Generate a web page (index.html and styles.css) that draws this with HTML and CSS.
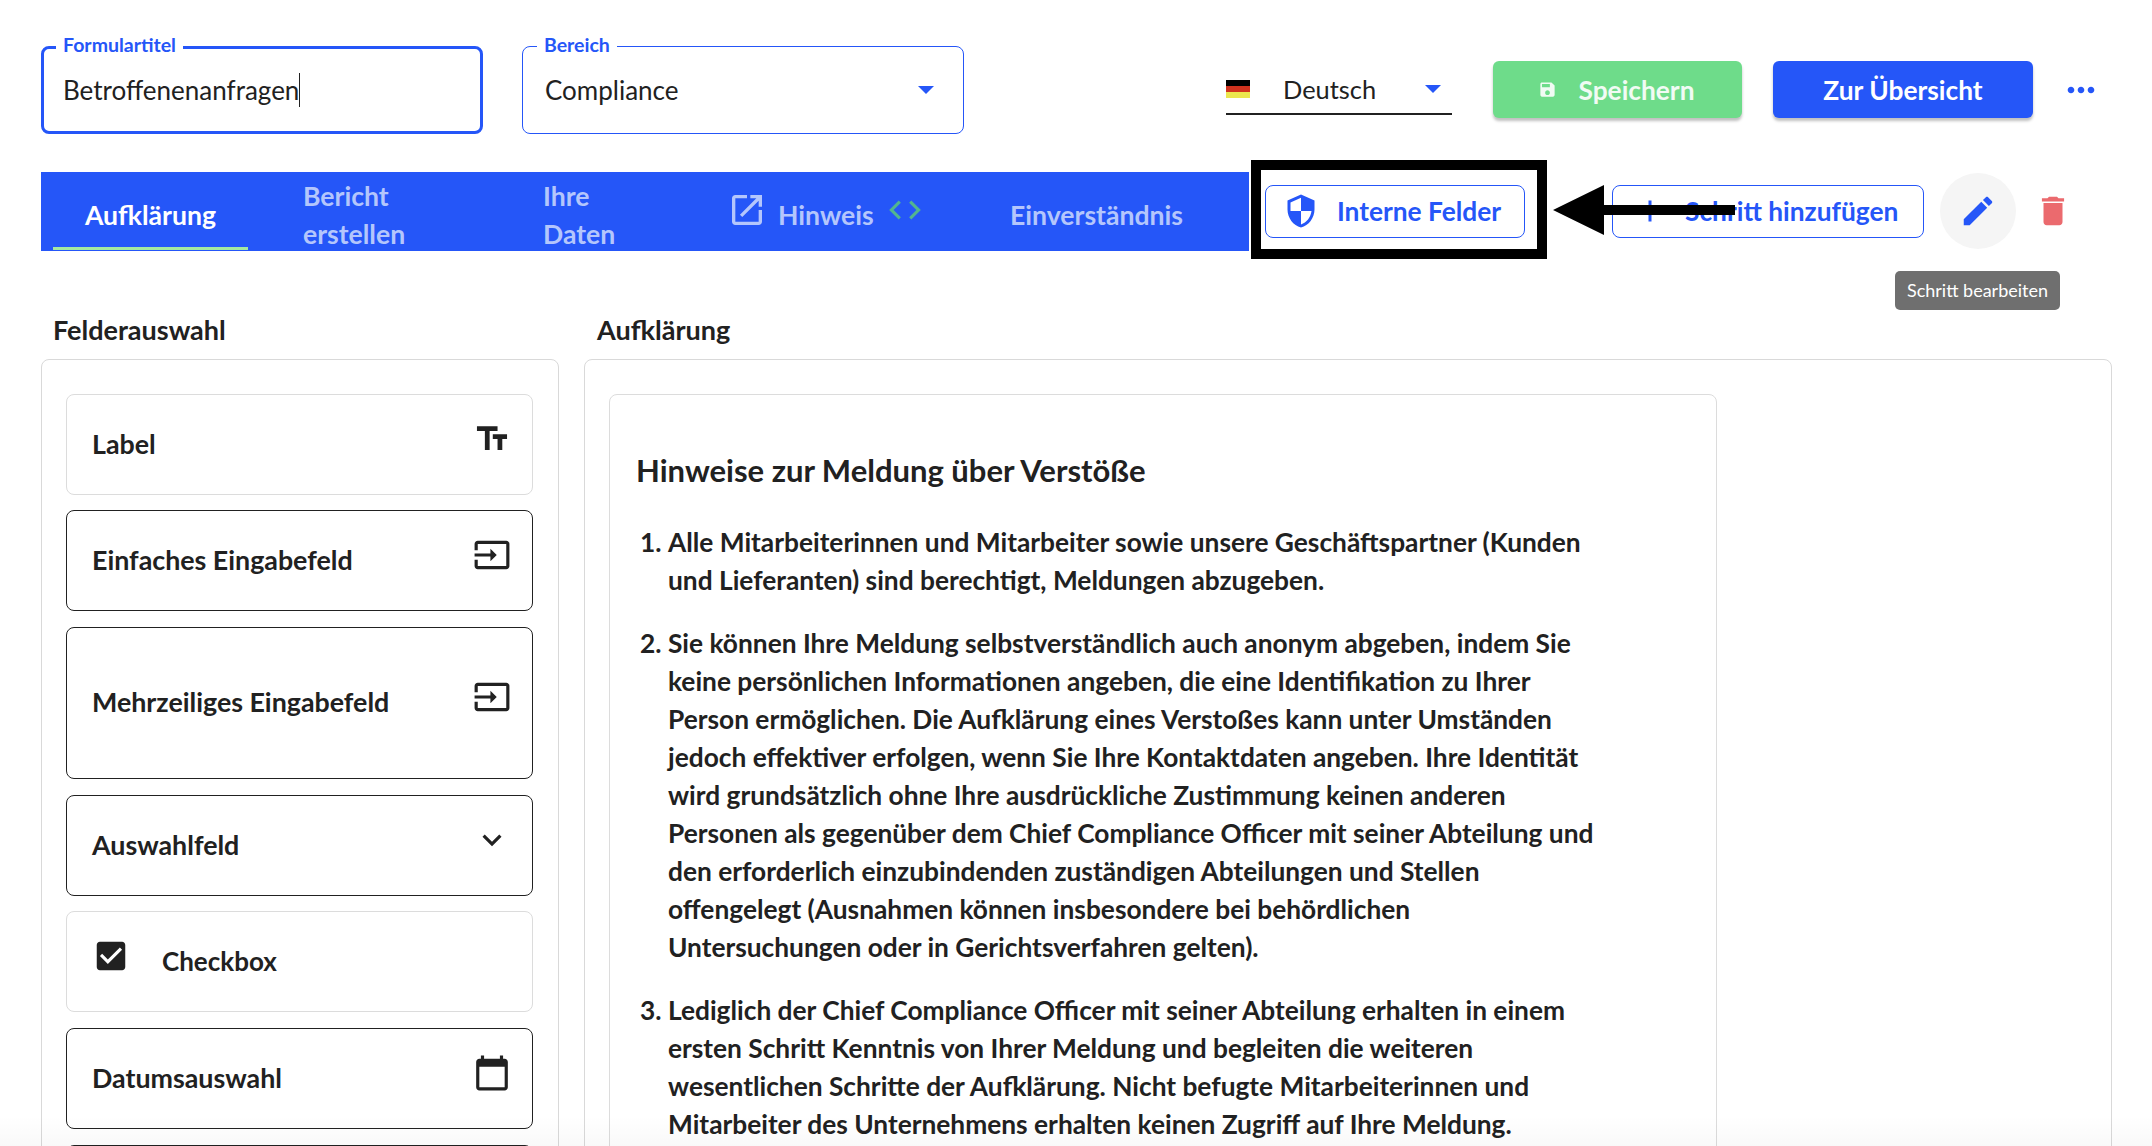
FILE: index.html
```html
<!DOCTYPE html>
<html lang="de">
<head>
    <meta charset="utf-8">
    <meta name="viewport" content="width=device-width, initial-scale=1.0">
    <title>Formular bearbeiten</title>
    <link rel="stylesheet" href="styles.css">
</head>
<body>
    <div class="page">
        <header class="topbar">
            <div class="outlined outlined-focus">
                <span class="outlined-label">Formulartitel</span>
                <span class="outlined-value">Betroffenenanfragen<span class="caret-line"></span></span>
            </div>
            <div class="outlined">
                <span class="outlined-label">Bereich</span>
                <span class="outlined-value">Compliance</span>
                <span class="select-arrow"></span>
            </div>
            <div class="lang-select">
                <span class="flag"><i class="flag-black"></i><i class="flag-red"></i><i class="flag-gold"></i></span>
                <span class="lang-name">Deutsch</span>
                <span class="select-arrow"></span>
            </div>
            <button type="button" class="btn btn-save">
                <svg class="save-icon" viewBox="0 0 24 24"><path d="M17 3H5c-1.11 0-2 .9-2 2v14c0 1.1.89 2 2 2h14c1.1 0 2-.9 2-2V7l-4-4zm-5 16c-1.66 0-3-1.34-3-3s1.34-3 3-3 3 1.34 3 3-1.34 3-3 3zm3-10H5V5h10v4z"/></svg>
                Speichern
            </button>
            <button type="button" class="btn btn-primary">Zur Übersicht</button>
            <svg class="more-icon" viewBox="0 0 24 24"><path d="M6 10c-1.1 0-2 .9-2 2s.9 2 2 2 2-.9 2-2-.9-2-2-2zm12 0c-1.1 0-2 .9-2 2s.9 2 2 2 2-.9 2-2-.9-2-2-2zm-6 0c-1.1 0-2 .9-2 2s.9 2 2 2 2-.9 2-2-.9-2-2-2z"/></svg>
        </header>

        <nav class="steps">
            <div class="tabs">
                <a class="tab tab-active">Aufklärung</a>
                <a class="tab tab-report">Bericht<br>erstellen</a>
                <a class="tab tab-data">Ihre<br>Daten</a>
                <a class="tab tab-note">
                    <svg class="open-icon" viewBox="0 0 24 24"><path d="M19 19H5V5h7V3H5c-1.11 0-2 .9-2 2v14c0 1.1.89 2 2 2h14c1.1 0 2-.9 2-2v-7h-2v7zM14 3v2h3.59l-9.83 9.83 1.41 1.41L19 6.41V10h2V3h-7z"/></svg>
                    Hinweis
                    <svg class="code-icon" viewBox="0 0 24 24"><path d="M9.4 16.6L4.8 12l4.6-4.6L8 6l-6 6 6 6 1.4-1.4zm5.2 0l4.6-4.6-4.6-4.6L16 6l6 6-6 6-1.4-1.4z"/></svg>
                </a>
                <a class="tab tab-consent">Einverständnis</a>
            </div>
            <button type="button" class="btn-outline btn-internal">
                <svg class="shield-icon" viewBox="0 0 24 24"><path d="M12 1L3 5v6c0 5.55 3.84 10.74 9 12 5.16-1.26 9-6.45 9-12V5l-9-4zm0 10.99h7c-.53 4.12-3.28 7.79-7 8.94V12H5V6.3l7-3.11v8.8z"/></svg>
                Interne Felder
            </button>
            <button type="button" class="btn-outline btn-add">
                <svg class="plus-icon" viewBox="0 0 24 24"><path d="M19 13h-6v6h-2v-6H5v-2h6V5h2v6h6v2z"/></svg>
                Schritt hinzufügen
            </button>
            <div class="round-btn">
                <svg class="edit-icon" viewBox="0 0 24 24"><path d="M3 17.25V21h3.75L17.81 9.94l-3.75-3.75L3 17.25zM20.71 7.04c.39-.39.39-1.02 0-1.41l-2.34-2.34c-.39-.39-1.02-.39-1.41 0l-1.83 1.83 3.75 3.75 1.83-1.83z"/></svg>
            </div>
            <svg class="trash-icon" viewBox="0 0 24 24"><path d="M6 19c0 1.1.9 2 2 2h8c1.1 0 2-.9 2-2V7H6v12zM19 4h-3.5l-1-1h-5l-1 1H5v2h14V4z"/></svg>
        </nav>

        <main class="columns">
            <section class="col-fields">
                <h2 class="col-title">Felderauswahl</h2>
                <div class="panel field-list">
                    <div class="field field-muted">
                        <span>Label</span>
                        <svg class="field-icon" viewBox="0 0 24 24"><path d="M2.5 4v3h5v12h3V7h5V4h-13zm19 5h-9v3h3v7h3v-7h3V9z"/></svg>
                    </div>
                    <div class="field">
                        <span>Einfaches Eingabefeld</span>
                        <svg class="field-icon" viewBox="0 0 24 24"><path d="M21 3.01H3c-1.1 0-2 .9-2 2V9h2V4.99h18v14.03H3V15H1v4.01c0 1.1.9 1.98 2 1.98h18c1.1 0 2-.88 2-1.98v-14c0-1.11-.9-2-2-2zM11 16l4-4-4-4v3H1v2h10v3z"/></svg>
                    </div>
                    <div class="field field-tall">
                        <span>Mehrzeiliges Eingabefeld</span>
                        <svg class="field-icon" viewBox="0 0 24 24"><path d="M21 3.01H3c-1.1 0-2 .9-2 2V9h2V4.99h18v14.03H3V15H1v4.01c0 1.1.9 1.98 2 1.98h18c1.1 0 2-.88 2-1.98v-14c0-1.11-.9-2-2-2zM11 16l4-4-4-4v3H1v2h10v3z"/></svg>
                    </div>
                    <div class="field">
                        <span>Auswahlfeld</span>
                        <svg class="field-icon" viewBox="0 0 24 24"><path d="M7.41 8.59L12 13.17l4.59-4.58L18 10l-6 6-6-6 1.41-1.41z"/></svg>
                    </div>
                    <div class="field field-muted field-check">
                        <svg class="check-icon" viewBox="0 0 24 24"><path d="M19 3H5c-1.11 0-2 .9-2 2v14c0 1.1.89 2 2 2h14c1.11 0 2-.9 2-2V5c0-1.1-.89-2-2-2zm-9 14l-5-5 1.41-1.41L10 14.17l7.59-7.59L19 8l-9 9z"/></svg>
                        <span>Checkbox</span>
                    </div>
                    <div class="field">
                        <span>Datumsauswahl</span>
                        <svg class="field-icon" viewBox="0 0 24 24"><path d="M20 3h-1V1h-2v2H7V1H5v2H4c-1.1 0-2 .9-2 2v16c0 1.1.9 2 2 2h16c1.1 0 2-.9 2-2V5c0-1.1-.9-2-2-2zm0 18H4V8h16v13z"/></svg>
                    </div>
                    <div class="field"></div>
                </div>
            </section>

            <section class="col-preview">
                <h2 class="col-title">Aufklärung</h2>
                <div class="panel preview">
                    <article class="notice">
                        <h3>Hinweise zur Meldung über Verstöße</h3>
                        <ol>
                            <li>Alle Mitarbeiterinnen und Mitarbeiter sowie unsere Geschäftspartner (Kunden<br>und Lieferanten) sind berechtigt, Meldungen abzugeben.</li>
                            <li>Sie können Ihre Meldung selbstverständlich auch anonym abgeben, indem Sie<br>keine persönlichen Informationen angeben, die eine Identifikation zu Ihrer<br>Person ermöglichen. Die Aufklärung eines Verstoßes kann unter Umständen<br>jedoch effektiver erfolgen, wenn Sie Ihre Kontaktdaten angeben. Ihre Identität<br>wird grundsätzlich ohne Ihre ausdrückliche Zustimmung keinen anderen<br>Personen als gegenüber dem Chief Compliance Officer mit seiner Abteilung und<br>den erforderlich einzubindenden zuständigen Abteilungen und Stellen<br>offengelegt (Ausnahmen können insbesondere bei behördlichen<br>Untersuchungen oder in Gerichtsverfahren gelten).</li>
                            <li>Lediglich der Chief Compliance Officer mit seiner Abteilung erhalten in einem<br>ersten Schritt Kenntnis von Ihrer Meldung und begleiten die weiteren<br>wesentlichen Schritte der Aufklärung. Nicht befugte Mitarbeiterinnen und<br>Mitarbeiter des Unternehmens erhalten keinen Zugriff auf Ihre Meldung.</li>
                        </ol>
                    </article>
                </div>
            </section>
        </main>

        <!-- hover tooltip of the pencil button -->
        <div class="tooltip">Schritt bearbeiten</div>

        <!-- callout drawn over the toolbar -->
        <div class="callout-box"></div>
        <svg class="callout-arrow" viewBox="0 0 182 50"><path d="M0 25L51 0v20h131v10H51v20z"/></svg>

        <div class="bottom-fade"></div>
    </div>
</body>
</html>
```
FILE: styles.css
```css
* {
    box-sizing: border-box;
}

body {
    margin: 0;
    background-color: #ffffff;
    color: #212121;
    font-family: 'Lato', 'Noto Sans', sans-serif;
}

.page {
    position: relative;
    width: 2152px;
    height: 1146px;
    overflow: hidden;
}

svg {
    display: block;
    fill: currentColor;
    flex: none;
}

/* top row */
.topbar {
    display: flex;
    align-items: center;
    height: 88px;
    margin-top: 46px;
    padding-left: 41px;
}

.outlined {
    position: relative;
    display: flex;
    align-items: center;
    justify-content: space-between;
    width: 442px;
    height: 88px;
    margin-right: 40px;
    padding: 0 29px 0 22px;
    border: 1px solid #2556f8;
    border-radius: 8px;
}

.outlined-focus {
    margin-right: 39px;
    border-width: 3px;
    padding: 0 19px;
}

.outlined-label {
    position: absolute;
    top: -12px;
    left: 14px;
    padding: 0 7px;
    background-color: #ffffff;
    color: #2556f8;
    font-size: 19.5px;
    line-height: 20px;
    font-weight: 700;
}

.outlined-focus .outlined-label {
    top: -14px;
    left: 12px;
}

.outlined-value {
    display: flex;
    align-items: center;
    font-size: 26px;
}

.caret-line {
    width: 1px;
    height: 34px;
    background-color: #212121;
}

.select-arrow {
    width: 0;
    height: 0;
    border-left: 8px solid transparent;
    border-right: 8px solid transparent;
    border-top: 8px solid #2556f8;
}

.lang-select {
    display: flex;
    align-items: center;
    width: 226px;
    height: 50px;
    margin-left: 222px;
    padding-right: 11px;
    border-bottom: 2px solid #212121;
}

.flag {
    display: flex;
    flex-direction: column;
    width: 24px;
    height: 18px;
}

.flag i {
    flex: 1;
}

.flag-black {
    background-color: #000000;
}

.flag-red {
    background-color: #d0321e;
}

.flag-gold {
    background-color: #ece64e;
}

.lang-name {
    margin-left: 33px;
    margin-right: auto;
    font-size: 25.4px;
}

.btn {
    display: flex;
    align-items: center;
    justify-content: center;
    height: 57px;
    margin-top: -1px;
    border: none;
    border-radius: 6px;
    color: #ffffff;
    font-family: inherit;
    font-size: 26.3px;
    font-weight: 700;
    box-shadow: 0 3px 3px rgba(0, 0, 0, 0.25);
}

.btn-save {
    width: 249px;
    margin-left: 41px;
    padding-right: 8px;
    background-color: #6edc8a;
    color: #f1fbf4;
}

.save-icon {
    width: 19px;
    height: 19px;
    margin-right: 21px;
}

.btn-primary {
    width: 260px;
    margin-left: 31px;
    background-color: #2556f8;
}

.more-icon {
    width: 40px;
    height: 40px;
    margin-left: 28px;
    color: #2556f8;
}

/* tab strip and step actions */
.steps {
    display: flex;
    align-items: center;
    margin-top: 38px;
    padding-left: 41px;
}

.tabs {
    display: flex;
    width: 1208px;
    height: 79px;
    padding-left: 12px;
    background-color: #2556f8;
}

.tab {
    position: relative;
    display: flex;
    align-items: center;
    padding: 7px 0 0 55px;
    color: #b4c6fc;
    font-size: 26.6px;
    line-height: 38px;
    font-weight: 700;
}

.tab-active {
    justify-content: center;
    width: 195px;
    padding-left: 0;
    color: #ffffff;
}

.tab-active::after {
    content: "";
    position: absolute;
    left: 0;
    right: 0;
    bottom: 1px;
    height: 3px;
    background-color: #a5e8a0;
}

.tab-report {
    width: 240px;
}

.tab-data {
    width: 188px;
}

.tab-note {
    width: 279px;
}

.open-icon {
    width: 40px;
    height: 40px;
    margin: -10px 11px 0 -4px;
}

.code-icon {
    width: 38px;
    height: 38px;
    margin: -10px 0 0 12px;
    color: #52b590;
}

.btn-outline {
    display: flex;
    align-items: center;
    height: 53px;
    padding-bottom: 2px;
    background-color: #ffffff;
    border: 1px solid #2556f8;
    border-radius: 8px;
    color: #2556f8;
    font-family: inherit;
    font-size: 26.3px;
    font-weight: 700;
}

.btn-internal {
    width: 260px;
    margin-left: 16px;
    padding-left: 17px;
}

.shield-icon {
    width: 36px;
    height: 36px;
    margin-right: 18px;
}

.btn-add {
    width: 312px;
    margin-left: 87px;
    padding-left: 19px;
}

.plus-icon {
    width: 36px;
    height: 36px;
    margin-right: 17px;
}

.round-btn {
    display: flex;
    align-items: center;
    justify-content: center;
    width: 76px;
    height: 76px;
    margin-top: -1px;
    margin-left: 16px;
    background-color: #f5f5f5;
    border-radius: 50%;
    color: #2556f8;
}

.edit-icon {
    width: 38px;
    height: 38px;
}

.trash-icon {
    width: 38px;
    height: 38px;
    margin-top: -2px;
    margin-left: 18px;
    color: #eb6a6e;
}

.tooltip {
    position: absolute;
    top: 271px;
    left: 1895px;
    width: 165px;
    height: 39px;
    background-color: #6f6f6f;
    border-radius: 5px;
    color: #ffffff;
    font-size: 18px;
    line-height: 39px;
    text-align: center;
}

.callout-box {
    position: absolute;
    top: 160px;
    left: 1251px;
    width: 296px;
    height: 99px;
    border: 10px solid #000000;
}

.callout-arrow {
    position: absolute;
    top: 185px;
    left: 1553px;
    width: 182px;
    height: 50px;
    fill: #000000;
}

.bottom-fade {
    position: absolute;
    left: 0;
    right: 0;
    bottom: 0;
    height: 30px;
    background: linear-gradient(rgba(0, 0, 0, 0), rgba(0, 0, 0, 0.025));
}

/* lower columns */
.columns {
    display: flex;
    gap: 25px;
    margin-top: 60px;
    padding-left: 41px;
}

.col-title {
    margin: 0 0 10px;
    padding-left: 12px;
    font-size: 27px;
    line-height: 38px;
    font-weight: 700;
}

.col-preview .col-title {
    padding-left: 13px;
}

.col-fields {
    flex: none;
    width: 518px;
}

.col-preview {
    flex: none;
    width: 1528px;
}

.panel {
    background-color: #ffffff;
    border: 1px solid #d9d9d9;
    border-radius: 8px;
}

.field-list {
    display: flex;
    flex-direction: column;
    gap: 15.7px;
    padding: 33.5px 25px 33.5px 24px;
}

.field {
    display: flex;
    align-items: center;
    justify-content: space-between;
    flex: none;
    height: 101px;
    padding: 0 21px 1px 25px;
    border: 1.5px solid #212121;
    border-radius: 8px;
    font-size: 26.8px;
    font-weight: 700;
}

.field-muted {
    border-color: #dcdcdc;
}

.field-tall {
    height: 152px;
}

.field-check {
    justify-content: flex-start;
    padding-left: 25px;
    font-size: 26px;
}

.field-icon {
    width: 38px;
    height: 38px;
    margin-bottom: 10px;
}

.check-icon {
    width: 38px;
    height: 38px;
    margin: 0 32px 10px 0;
}

.preview {
    height: 800px;
    padding: 33.5px 24px;
}

.notice {
    width: 1108px;
    height: 800px;
    padding: 56px 26px 0;
    border: 1px solid #dcdcdc;
    border-radius: 8px;
}

.notice h3 {
    margin: 0 0 34px;
    font-size: 31px;
    line-height: 38px;
    font-weight: 700;
}

.notice ol {
    margin: 0;
    padding-left: 32px;
    font-size: 26.3px;
    line-height: 38px;
    font-weight: 700;
}

.notice li {
    margin-bottom: 25px;
}
```
